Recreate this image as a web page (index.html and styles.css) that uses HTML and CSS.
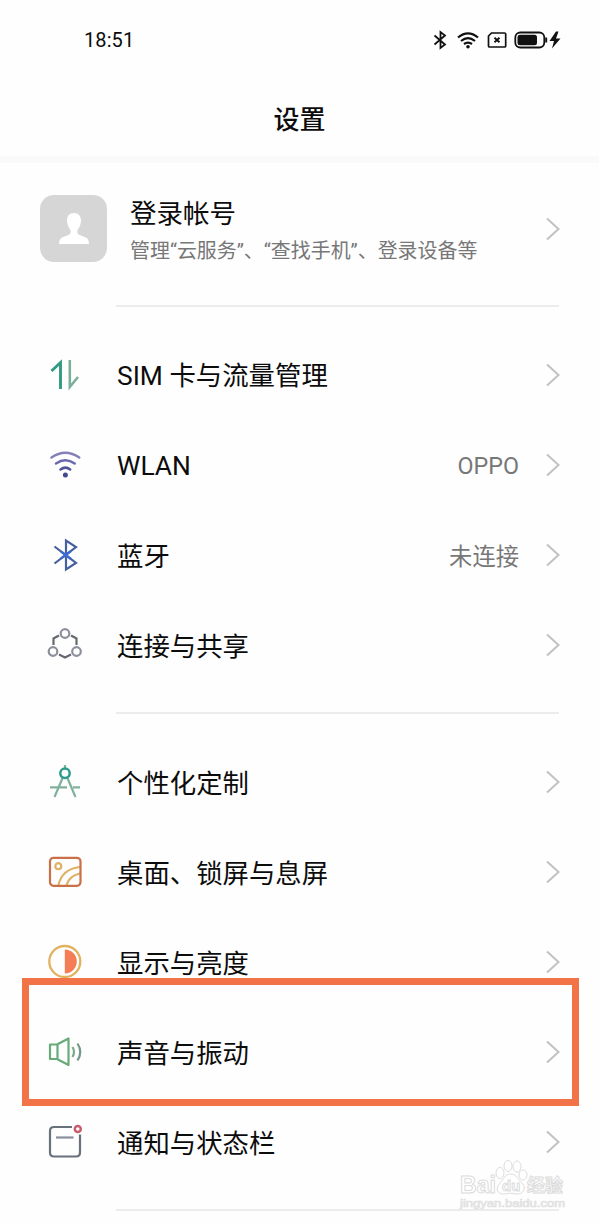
FILE: index.html
```html
<!DOCTYPE html>
<html lang="zh-CN">
<head>
<meta charset="utf-8">
<title>设置</title>
<link rel="stylesheet" href="styles.css">
</head>
<body>
<svg class="defs" width="0" height="0"><symbol id="chev" viewBox="0 0 14 24"><path d="M1 1.500L12.500 12L1 22.500" fill="none" stroke="#c2c2c2" stroke-width="2"/></symbol></svg>
<div class="screen">
  <header class="header">
    <div class="status">
      <span class="time">18:51</span>
      <svg class="status-icons" width="130" height="20" viewBox="0 0 130 20" fill="none" stroke="#111">
        <path d="M2.500 5.500L13 14.500L8.500 18V2L13 5.500L2.500 14.500" stroke-width="1.800"/>
        <path d="M26 7.500Q36 -.8 46 7.500M29 11Q36 5.300 43 11M32 14Q36 11.200 40 14" stroke-width="2.200"/>
        <circle cx="36" cy="16.800" r="1.800" fill="#111" stroke="none"/>
        <path d="M59.500 3H72.500Q73.700 3 73.700 4V16Q73.700 17 72.500 17H57.500Q56.500 17 56.500 16V6Z" stroke-width="1.700"/>
        <path d="M62.500 7.800L67.500 12.300M67.500 7.800L62.500 12.300" stroke-width="1.900"/>
        <rect x="83.300" y="2.500" width="29" height="15" rx="5" stroke-width="1.800"/>
        <rect x="85.500" y="4.700" width="19.500" height="10.600" rx="2.500" fill="#111" stroke="none"/>
        <path d="M114.200 7.500V12.500" stroke-width="1.900"/>
        <path d="M124 1.500L117.500 11H122L120 18.500L128.500 8.500H124L126.500 1.500Z" fill="#111" stroke="none"/>
      </svg>
    </div>
    <h1 class="title">设置</h1>
  </header>

  <section class="account">
    <div class="avatar"><svg width="30" height="32" viewBox="0 0 30 32"><path d="M15 0C19.500 0 22 3 22 7.500C22 12 20 15 18.500 17C18 20 18.500 21 20.500 22L27 24.500Q30 26 30 31H0Q0 26 3 24.500L9.500 22C11.500 21 12 20 11.500 17C10 15 8 12 8 7.500C8 3 10.500 0 15 0Z" fill="#fff"/></svg></div>
    <div class="account-text">
      <div class="account-name">登录帐号</div>
      <div class="account-note">管理“云服务”、“查找手机”、登录设备等</div>
    </div>
    <svg class="chevron"><use href="#chev"/></svg>
  </section>
  <hr class="divider">

  <section class="group">
    <div class="row">
      <svg class="icon" viewBox="0 0 36 36" fill="none"><path d="M4.500 14L13.500 5.500V32" stroke="#329b83" stroke-width="2.900"/><path d="M22.800 3V30L31 20" stroke="#78b198" stroke-width="2.500"/></svg>
      <span class="label latin">SIM 卡与流量管理</span>
      <svg class="chevron"><use href="#chev"/></svg>
    </div>
    <div class="row">
      <svg class="icon" viewBox="0 0 36 36" fill="none" stroke-width="2.500" stroke-linecap="round"><path d="M4.500 10.500Q18.400 1 32.200 10.500" stroke="#8580bb"/><path d="M9 16.500Q18.400 10 27.700 16.500" stroke="#6b69ad"/><path d="M13.500 22.500Q18.400 18.700 23.200 22.500" stroke="#51539c"/><circle cx="18.400" cy="28" r="2.500" fill="#44488e"/></svg>
      <span class="label latin">WLAN</span><span class="value latin">OPPO</span>
      <svg class="chevron"><use href="#chev"/></svg>
    </div>
    <div class="row">
      <svg class="icon" viewBox="0 0 36 36" fill="none" stroke="#46609e" stroke-width="2.200"><path d="M7.500 9.500L29 26L19 32.500V3.500L29 10L7.500 26.500"/><path d="M14 14.500L24 22M24 14L14 21.500" stroke="#3e68d4"/></svg>
      <span class="label">蓝牙</span><span class="value">未连接</span>
      <svg class="chevron"><use href="#chev"/></svg>
    </div>
    <div class="row">
      <svg class="icon" viewBox="0 0 36 36" fill="none" stroke-width="2.200"><path d="M12 8.500L6.500 11.500V18M24 8.500L29.500 11.500V18M12 27.500L18 30.500L24 27.500" stroke="#666a70"/><g stroke="#8b909c"><circle cx="18" cy="6.500" r="4.300"/><circle cx="6" cy="24.500" r="4.300"/><circle cx="29.500" cy="24.500" r="4.300"/></g></svg>
      <span class="label">连接与共享</span>
      <svg class="chevron"><use href="#chev"/></svg>
    </div>
  </section>
  <hr class="divider">

  <section class="group">
    <div class="row">
      <svg class="icon" viewBox="0 0 36 36" fill="none"><path d="M18 1V5M16 13L7.500 33M20 13L28.500 33M3 23.300H20M26 23.300H33" stroke="#80b19c" stroke-width="2.200"/><circle cx="18" cy="9.300" r="4.700" stroke="#2d9c8d" stroke-width="2.500"/></svg>
      <span class="label">个性化定制</span>
      <svg class="chevron"><use href="#chev"/></svg>
    </div>
    <div class="row">
      <svg class="icon" viewBox="0 0 36 36" fill="none" stroke="#dfb067" stroke-width="2.200"><circle cx="11.300" cy="12.200" r="3"/><path d="M11.500 31Q15 15 33 13M19.500 31Q22 22 33 19.500"/><rect x="3" y="3.800" width="30.500" height="28" rx="3.500" stroke="#ca7049"/></svg>
      <span class="label">桌面、锁屏与息屏</span>
      <svg class="chevron"><use href="#chev"/></svg>
    </div>
    <div class="row">
      <svg class="icon" viewBox="0 0 36 36" fill="none"><circle cx="17.800" cy="17.500" r="15.500" stroke="#e1b25e" stroke-width="2.300"/><path d="M17.800 5.500A12 12 0 0 1 17.800 29.500Z" fill="#f47d55"/></svg>
      <span class="label">显示与亮度</span>
      <svg class="chevron"><use href="#chev"/></svg>
    </div>
    <div class="row marked">
      <svg class="icon" viewBox="0 0 36 36" fill="none" stroke="#68aa78" stroke-width="2.200" stroke-linejoin="round"><path d="M3 10.500H10L21.500 4.500V31L10 25H3ZM10.500 10.500V25"/><path d="M25.500 13Q28.500 18 25.500 23" stroke="#7caa8a"/><path d="M30.500 9.500Q36 18 30.500 26.500" stroke="#759889"/></svg>
      <span class="label">声音与振动</span>
      <svg class="chevron"><use href="#chev"/></svg>
      <div class="highlight"></div>
    </div>
    <div class="row">
      <svg class="icon" viewBox="0 0 36 36" fill="none" stroke="#68717c" stroke-width="2.200"><path d="M25 3H7Q3 3 3 7V28.500Q3 32.500 7 32.500H29Q33 32.500 33 28.500V10.500"/><path d="M9 13.500H26.500" stroke="#888e9d"/><circle cx="30.800" cy="5" r="3" stroke="#c75e6d" stroke-width="2.500"/></svg>
      <span class="label">通知与状态栏</span>
      <svg class="chevron"><use href="#chev"/></svg>
    </div>
  </section>
  <hr class="divider">

  <div class="watermark">
    <svg width="108" height="52" viewBox="0 0 108 52" fill="#fff" stroke="#dcdcdc" stroke-width="1">
      <text class="wm-brand" x="1" y="33" textLength="36" lengthAdjust="spacingAndGlyphs">Bai</text>
      <ellipse cx="41" cy="13" rx="4" ry="5.500"/><ellipse cx="49" cy="6" rx="4" ry="5.500"/><ellipse cx="58" cy="6.500" rx="4" ry="5.500"/><ellipse cx="64" cy="15" rx="4" ry="5"/>
      <path d="M51.500 14C58 14 59 20 63 23C68 28 64 35 57 34C53 33 50 33 46 34C38 35 36 28 41 23C45 19 46 14 51.500 14Z"/>
      <text class="wm-du" x="43" y="31">du</text>
      <text class="wm-cn" x="68" y="32">经验</text>
      <text class="wm-url" x="1" y="47" textLength="105" lengthAdjust="spacingAndGlyphs">jingyan.baidu.com</text>
    </svg>
  </div>
</div>
</body>
</html>
```
FILE: styles.css
```css
* { box-sizing: border-box; }
body { margin: 0; background: #fdfdfd; }
.defs { position: absolute; }
.screen {
  position: relative;
  width: 599px;
  height: 1225px;
  overflow: hidden;
  background: #fefefe;
  color: #0c0c0c;
  font-family: Roboto, "Noto Sans CJK SC", sans-serif;
}
.header {
  height: 163px;
  padding-top: 28px;
  border-bottom: 7px solid #fafafa;
}
.status {
  display: flex;
  justify-content: space-between;
  align-items: center;
  height: 24px;
  padding: 0 37px 0 84px;
}
.time { font-size: 20px; line-height: 24px; letter-spacing: .1px; }
.title {
  margin: 49px 0 0;
  font-size: 26px;
  line-height: 38px;
  font-weight: 500;
  text-align: center;
}
.account {
  display: flex;
  align-items: center;
  height: 142px;
  padding: 0 39px 11px 40px;
}
.avatar {
  display: flex;
  justify-content: center;
  align-items: center;
  width: 67px;
  height: 67px;
  margin-right: 23px;
  border-radius: 14px;
  background: #d6d6d6;
}
.account-text { flex: 1; padding-top: 7px; }
.account-name { font-size: 26.500px; line-height: 38px; }
.account-note { font-size: 19.950px; line-height: 36px; color: #777; white-space: nowrap; }
.chevron { display: block; flex: none; width: 14px; height: 24px; }
.divider {
  height: 2px;
  margin: 0 40px 0 116px;
  border: 0;
  background: #ececec;
}
.group { padding: 23px 0 22px; }
.row {
  display: flex;
  align-items: center;
  height: 90px;
  padding: 0 39px 0 47px;
}
.icon { flex: none; width: 36px; height: 36px; margin-right: 34px; }
.label { flex: 1; padding-top: 4px; font-size: 26.400px; line-height: 38px; }
.value { margin-right: 27px; padding-top: 3px; font-size: 23.300px; line-height: 34px; color: #777; }
.latin { padding-top: 2px; }
.marked { position: relative; }
.highlight {
  position: absolute;
  left: 22px;
  top: -29px;
  width: 557px;
  height: 128px;
  border: 7px solid #f17347;
}
.watermark { position: absolute; left: 459px; top: 1160px; }
.watermark svg { display: block; }
.wm-brand { font: 700 23px "Liberation Sans", sans-serif; }
.wm-du { font: 700 15px "Liberation Sans", sans-serif; }
.wm-cn { font: 700 18px "Noto Sans CJK SC", sans-serif; }
.wm-url { font: 10px "Liberation Sans", sans-serif; stroke: #e0e0e0; stroke-width: .7px; }
```
